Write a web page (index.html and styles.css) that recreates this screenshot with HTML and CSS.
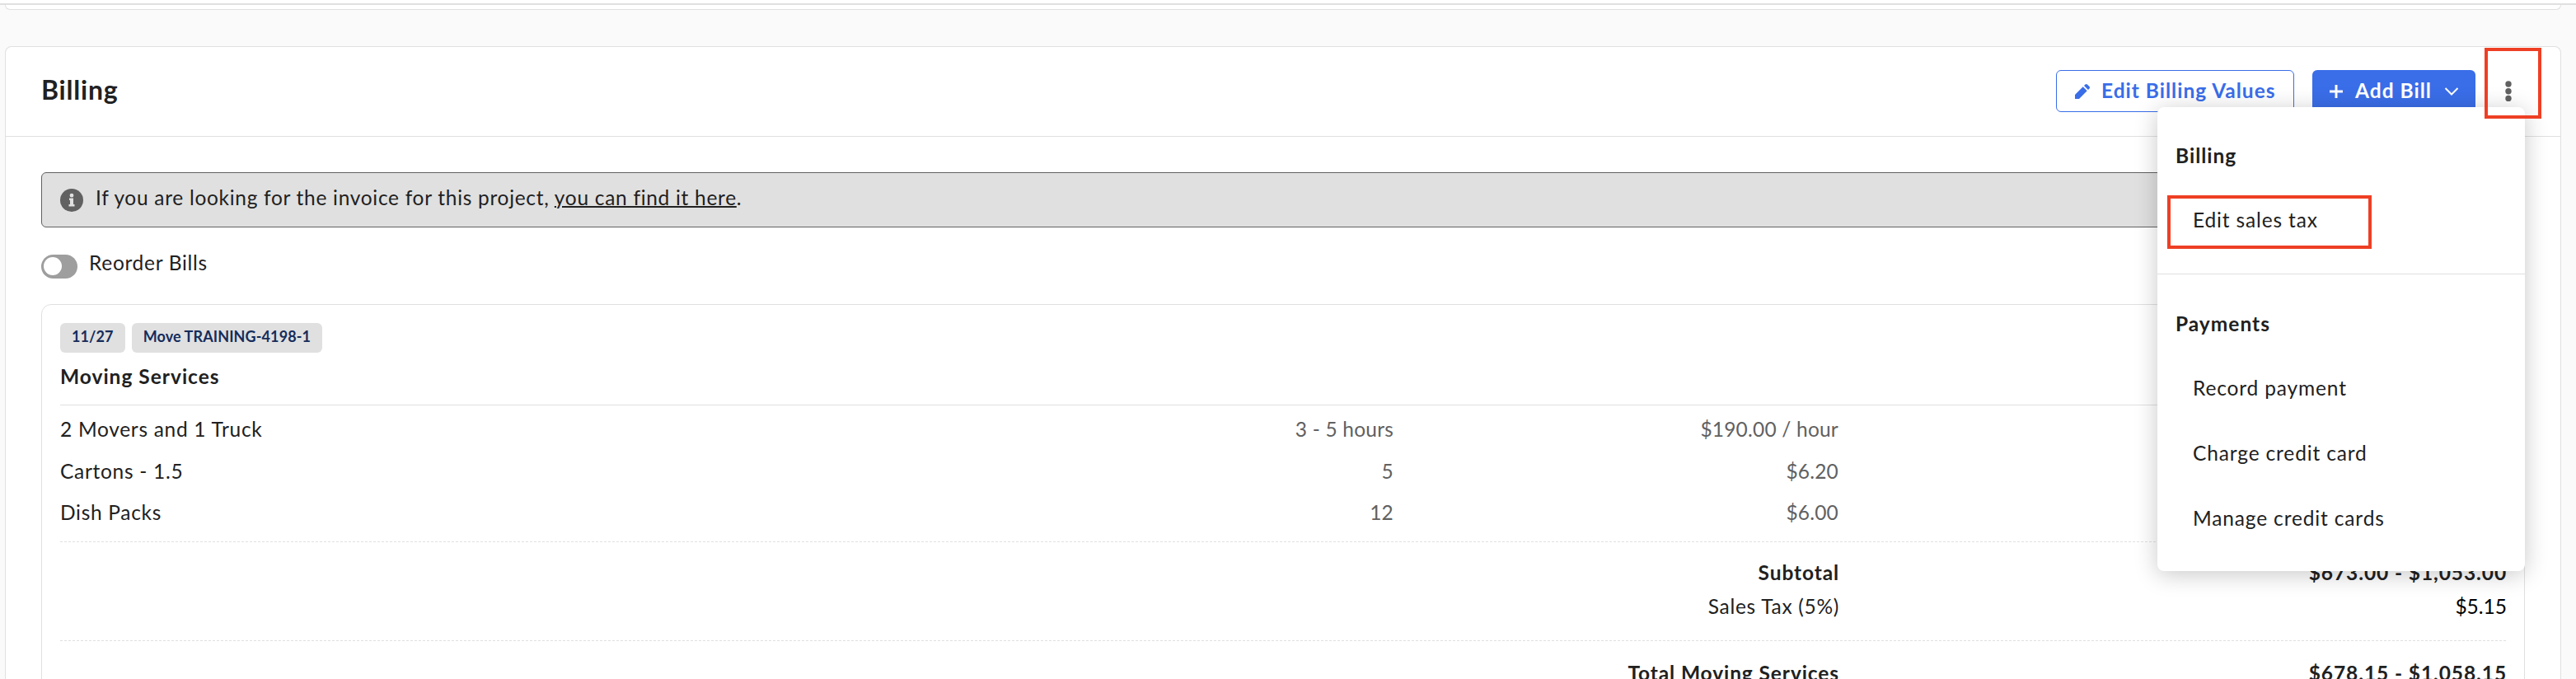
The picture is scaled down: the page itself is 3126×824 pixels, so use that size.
FILE: index.html
```html
<!DOCTYPE html>
<html lang="en">
  <head>
    <meta charset="utf-8" />
    <title>Billing</title>
    <meta name="viewport" content="width=device-width, initial-scale=1.0" />
    <link rel="stylesheet" href="styles.css">
  </head>
  <body>
    <div class="topbar"></div>
    <div class="previous-card"></div>
    <section class="card">
      <header class="card-header">
        <h2>Billing</h2>
        <div class="actions">
          <button class="button button-outline">
            <svg class="icon-pencil" viewBox="0 0 18 18" width="18" height="18">
              <path d="M0 18v-5L9.700 3.300l5 5L5 18zM11 2l1.500-1.500q1.200-1 2.400 0l2.600 2.600q1 1.200 0 2.400L16 7z" />
            </svg>
            <span>Edit Billing Values</span>
          </button>
          <button class="button button-primary">
            <svg class="icon-plus" viewBox="0 0 16 16" width="16" height="16">
              <path d="M8 0v16M0 8h16" />
            </svg>
            <span>Add Bill</span>
            <svg class="icon-chevron" viewBox="0 0 18 10" width="18" height="10">
              <path d="M1.500 1l7.500 7.500L16.500 1" />
            </svg>
          </button>
          <button class="kebab">
            <svg viewBox="0 0 8 26" width="8" height="26">
              <circle cx="4" cy="4" r="3.700" />
              <circle cx="4" cy="12.700" r="3.700" />
              <circle cx="4" cy="21.400" r="3.700" />
            </svg>
          </button>
        </div>
      </header>
      <div class="card-body">
        <div class="alert">
          <svg class="icon-info" viewBox="0 0 28 28" width="28" height="28">
            <circle cx="14" cy="14" r="14" />
            <path fill="#e0e0e0" d="M11 11.500h5v7.500h1.500v2.500h-7V19H12v-5h-1zM14 5.800a2.400 2.400 0 1 1 0 4.800a2.400 2.400 0 1 1 0-4.800z" />
          </svg>
          <p>If you are looking for the invoice for this project, <a href="#">you can find it here</a>.</p>
        </div>
        <div class="reorder">
          <span class="toggle"></span>
          <span>Reorder Bills</span>
        </div>
        <div class="bill">
          <div class="tags">
            <span class="tag">11/27</span>
            <span class="tag">Move TRAINING-4198-1</span>
          </div>
          <h3>Moving Services</h3>
          <div class="items">
            <div class="row">
              <span>2 Movers and 1 Truck</span>
              <span class="muted">3 - 5 hours</span>
              <span class="muted">$190.00 / hour</span>
            </div>
            <div class="row">
              <span>Cartons - 1.5</span>
              <span class="muted">5</span>
              <span class="muted">$6.20</span>
            </div>
            <div class="row">
              <span>Dish Packs</span>
              <span class="muted">12</span>
              <span class="muted">$6.00</span>
            </div>
          </div>
          <div class="totals">
            <div class="total-row strong">
              <span>Subtotal</span>
              <span>$673.00 - $1,053.00</span>
            </div>
            <div class="total-row">
              <span>Sales Tax (5%)</span>
              <span class="tax">$5.15</span>
            </div>
          </div>
          <div class="totals">
            <div class="total-row strong">
              <span>Total Moving Services</span>
              <span>$678.15 - $1,058.15</span>
            </div>
          </div>
        </div>
      </div>
    </section>

    <div class="menu">
      <h4>Billing</h4>
      <a class="menu-item">Edit sales tax</a>
      <hr />
      <h4>Payments</h4>
      <a class="menu-item">Record payment</a>
      <a class="menu-item">Charge credit card</a>
      <a class="menu-item">Manage credit cards</a>
    </div>
    <div class="highlight highlight-kebab"></div>
    <div class="highlight highlight-tax"></div>
  </body>
</html>
```
FILE: styles.css
```css
* {
  box-sizing: border-box;
}
html {
  height: 824px;
  overflow: hidden;
}
body {
  margin: 0;
  height: 824px;
  overflow: hidden;
  background: #fafafa;
  color: #212121;
  font-family: Lato, 'Liberation Sans', sans-serif;
  font-size: 24.5px;
  line-height: 36px;
  letter-spacing: 0.7px;
}
h2,
h3,
h4,
p {
  margin: 0;
}
button {
  padding: 0;
  border: 0;
  background: none;
  color: inherit;
  font: inherit;
}
.topbar {
  height: 6px;
  background: #fff;
  border-bottom: 2px solid #e0e0e0;
}
.previous-card {
  height: 6px;
  margin: 0 18px 44px 6px;
  background: #fff;
  border: 1px solid #e0e0e0;
  border-top: 0;
  border-radius: 0 0 8px 8px;
}
.card {
  height: 768px;
  margin: 0 18px 0 6px;
  overflow: hidden;
  background: #fff;
  border: 1px solid #e0e0e0;
  border-bottom: 0;
  border-radius: 8px 8px 0 0;
}
.card-header {
  display: flex;
  justify-content: space-between;
  height: 109px;
  padding: 28px 59px 0 43px;
  border-bottom: 1px solid #e0e0e0;
}
.card-header h2 {
  padding-top: 5px;
  font-size: 32px;
  line-height: 38px;
  letter-spacing: 0.8px;
}
.actions {
  display: flex;
  align-items: flex-start;
}
.button {
  display: flex;
  align-items: center;
  height: 51px;
  border-radius: 6px;
  font-weight: bold;
  letter-spacing: 1px;
}
.button span {
  padding-bottom: 2px;
}
.button-outline {
  width: 289px;
  padding-left: 22px;
  margin-right: 22px;
  border: 1px solid #3a6de8;
  color: #3a6de8;
  gap: 14px;
}
.button-primary {
  width: 198px;
  padding-left: 21px;
  margin-right: 36px;
  background: #3a6de8;
  color: #fff;
  gap: 15px;
}
.icon-pencil {
  fill: #3a6de8;
}
.icon-plus,
.icon-chevron {
  fill: none;
  stroke: #fff;
  stroke-width: 3;
}
.icon-chevron {
  stroke-width: 2;
}
.kebab {
  padding-top: 13px;
  line-height: 0;
}
.kebab svg {
  fill: #616161;
}
.card-body {
  padding: 43px 43px 0;
}
.alert {
  display: flex;
  align-items: center;
  height: 67px;
  padding: 0 22px;
  gap: 15px;
  background: #e0e0e0;
  border: 1px solid #616161;
  border-radius: 6px;
}
.alert p {
  padding-bottom: 6px;
}
.alert a {
  color: inherit;
  text-decoration-thickness: 2px;
}
.icon-info {
  fill: #616161;
}
.reorder {
  display: flex;
  padding-top: 25px;
  height: 93px;
  gap: 14px;
}
.toggle {
  width: 44px;
  height: 29px;
  margin-top: 8px;
  padding: 3px;
  border-radius: 15px;
  background: #9e9e9e;
}
.toggle::before {
  content: '';
  display: block;
  width: 22px;
  height: 22px;
  border-radius: 50%;
  background: #fff;
}
.bill {
  height: 500px;
  padding: 22px 22px 0;
  border: 1px solid #e0e0e0;
  border-radius: 12px;
}
.tags {
  display: flex;
  gap: 8px;
}
.tag {
  height: 36px;
  padding: 0 14px;
  background: #e0e0e0;
  border-radius: 6px;
  color: #152c5b;
  font-size: 18px;
  font-weight: bold;
  line-height: 33px;
  letter-spacing: 0.1px;
}
.bill h3 {
  height: 64px;
  padding-top: 11px;
  border-bottom: 1px solid #e0e0e0;
  font-size: 24.5px;
  letter-spacing: 1px;
}
.items {
  padding: 4px 0 9px;
  border-bottom: 1px dashed #e0e0e0;
}
.row {
  display: grid;
  grid-template-columns: 1078px 540px 540px;
  line-height: 50.5px;
}
.muted {
  color: #616161;
  letter-spacing: 0.2px;
  text-align: right;
}
.totals {
  padding: 16px 0 21px;
  border-bottom: 1px dashed #e0e0e0;
}
.totals + .totals {
  padding-top: 18px;
}
.total-row {
  display: grid;
  grid-template-columns: 2158px 810px;
  line-height: 41px;
  text-align: right;
}
.total-row span {
  margin-right: -1px;
}
.strong {
  font-weight: bold;
  letter-spacing: 0.9px;
}
.tax {
  color: #000;
  letter-spacing: 0;
}
.menu {
  position: absolute;
  top: 130px;
  left: 2618px;
  width: 446px;
  height: 563px;
  padding-top: 41px;
  background: #fff;
  border-radius: 8px;
  box-shadow: 0 4px 28px rgba(0, 0, 0, 0.22);
  letter-spacing: 0.85px;
}
.menu h4 {
  padding: 0 0 20px 22px;
  font-size: 24.5px;
  letter-spacing: 1px;
}
.menu hr {
  height: 1px;
  margin: 26px 0 42px;
  border: 0;
  background: #e0e0e0;
}
.menu-item {
  display: block;
  padding-left: 43px;
  line-height: 79px;
}
/* red frames around the menu button and the sales tax entry */
.highlight {
  position: absolute;
  border: 4px solid #ee3f24;
}
.highlight-kebab {
  top: 58px;
  left: 3015px;
  width: 69px;
  height: 86px;
}
.highlight-tax {
  top: 237px;
  left: 2630px;
  width: 248px;
  height: 65px;
}
```
